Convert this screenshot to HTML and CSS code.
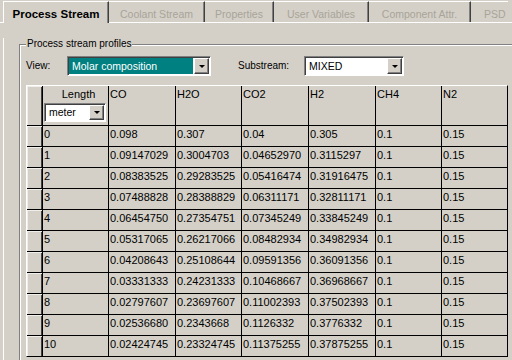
FILE: index.html
```html
<!DOCTYPE html>
<html lang="en">
<head>
    <meta charset="UTF-8">
    <title>Process Stream</title>
    <link rel="stylesheet" href="styles.css">
</head>
<body>

<div class="tabs">
    <div class="tab tab-active" style="width: 106px">Process Stream</div>
    <div class="tab" style="width: 96px">Coolant Stream</div>
    <div class="tab" style="width: 69px">Properties</div>
    <div class="tab" style="width: 95px">User Variables</div>
    <div class="tab" style="width: 102px">Component Attr.</div>
    <div class="tab tab-last" style="width: 37px">PSD</div>
</div>

<div class="panel">
    <fieldset class="group">
        <legend>Process stream profiles</legend>

        <div class="view-row">
            <span class="label label-view">View:</span>
            <div class="combo combo-view">
                <div class="combo-value selected">Molar composition</div>
                <div class="combo-btn"><span class="arrow"></span></div>
            </div>
            <span class="label label-sub">Substream:</span>
            <div class="combo combo-sub">
                <div class="combo-value">MIXED</div>
                <div class="combo-btn"><span class="arrow"></span></div>
            </div>
        </div>

        <div class="grid">
            <!-- header row -->
            <div class="cell rowhead"></div>
            <div class="cell head head-length">
                <div class="length-title">Length</div>
                <div class="combo combo-unit">
                    <div class="combo-value">meter</div>
                    <div class="combo-btn"><span class="arrow"></span></div>
                </div>
            </div>
            <div class="cell head">CO</div>
            <div class="cell head">H2O</div>
            <div class="cell head">CO2</div>
            <div class="cell head">H2</div>
            <div class="cell head">CH4</div>
            <div class="cell head">N2</div>

            <div class="cell rowhead"></div><div class="cell">0</div><div class="cell">0.098</div><div class="cell">0.307</div><div class="cell">0.04</div><div class="cell">0.305</div><div class="cell">0.1</div><div class="cell">0.15</div>
            <div class="cell rowhead"></div><div class="cell">1</div><div class="cell">0.09147029</div><div class="cell">0.3004703</div><div class="cell">0.04652970</div><div class="cell">0.3115297</div><div class="cell">0.1</div><div class="cell">0.15</div>
            <div class="cell rowhead"></div><div class="cell">2</div><div class="cell">0.08383525</div><div class="cell">0.29283525</div><div class="cell">0.05416474</div><div class="cell">0.31916475</div><div class="cell">0.1</div><div class="cell">0.15</div>
            <div class="cell rowhead"></div><div class="cell">3</div><div class="cell">0.07488828</div><div class="cell">0.28388829</div><div class="cell">0.06311171</div><div class="cell">0.32811171</div><div class="cell">0.1</div><div class="cell">0.15</div>
            <div class="cell rowhead"></div><div class="cell">4</div><div class="cell">0.06454750</div><div class="cell">0.27354751</div><div class="cell">0.07345249</div><div class="cell">0.33845249</div><div class="cell">0.1</div><div class="cell">0.15</div>
            <div class="cell rowhead"></div><div class="cell">5</div><div class="cell">0.05317065</div><div class="cell">0.26217066</div><div class="cell">0.08482934</div><div class="cell">0.34982934</div><div class="cell">0.1</div><div class="cell">0.15</div>
            <div class="cell rowhead"></div><div class="cell">6</div><div class="cell">0.04208643</div><div class="cell">0.25108644</div><div class="cell">0.09591356</div><div class="cell">0.36091356</div><div class="cell">0.1</div><div class="cell">0.15</div>
            <div class="cell rowhead"></div><div class="cell">7</div><div class="cell">0.03331333</div><div class="cell">0.24231333</div><div class="cell">0.10468667</div><div class="cell">0.36968667</div><div class="cell">0.1</div><div class="cell">0.15</div>
            <div class="cell rowhead"></div><div class="cell">8</div><div class="cell">0.02797607</div><div class="cell">0.23697607</div><div class="cell">0.11002393</div><div class="cell">0.37502393</div><div class="cell">0.1</div><div class="cell">0.15</div>
            <div class="cell rowhead"></div><div class="cell">9</div><div class="cell">0.02536680</div><div class="cell">0.2343668</div><div class="cell">0.1126332</div><div class="cell">0.3776332</div><div class="cell">0.1</div><div class="cell">0.15</div>
            <div class="cell rowhead"></div><div class="cell">10</div><div class="cell">0.02424745</div><div class="cell">0.23324745</div><div class="cell">0.11375255</div><div class="cell">0.37875255</div><div class="cell">0.1</div><div class="cell">0.15</div>
        </div>
    </fieldset>
</div>

</body>
</html>
```

FILE: styles.css
```css
body {
    margin: 0;
    width: 512px;
    height: 360px;
    overflow: hidden;
    background-color: #d4d0c8;
    font-family: "Liberation Sans", Arial, sans-serif;
    color: #000;
}

/* tab strip */
.tabs {
    display: flex;
    align-items: flex-start;
    height: 22px;
    padding-left: 3px;
    border-bottom: 1px solid #fff;
}
.tab {
    flex: none;
    box-sizing: border-box;
    height: 21px;
    margin-top: 1px;
    padding-top: 5px;
    border-top: 1px solid #fff;
    border-right: 1px solid #404040;
    box-shadow: inset -1px 0 #808080;
    font-size: 10.5px;
    line-height: 14px;
    text-align: center;
    color: #a8a498;
    white-space: nowrap;
    overflow: hidden;
}
.tab-last {
    text-align: left;
    padding-left: 13px;
    border-right: none;
    box-shadow: none;
}
.tab-active {
    height: 22px;
    border-left: 1px solid #fff;
    font-size: 11.5px;
    font-weight: bold;
    color: #000;
    background-color: #d4d0c8;
}

.panel {
    margin-left: 3px;
    height: 337px;
    border-left: 1px solid #fff;
}

/* group box, runs off the right and bottom of the window */
.group {
    box-sizing: border-box;
    width: 493px;
    height: 322px;
    margin: 15px 0 0 15px;
    padding: 6px 0 0 6px;
    border: 1px solid #808080;
    border-right: none;
    border-bottom: none;
    box-shadow: inset 1px 1px #fff;
}
.group legend {
    padding: 0 1px;
    font-size: 10px;
    line-height: 12px;
    background-color: #d4d0c8;
}

.view-row {
    display: flex;
    align-items: center;
    height: 20px;
}
.label {
    font-size: 10px;
    line-height: 12px;
}
.label-view {
    width: 41px;
}
.label-sub {
    width: 66px;
    margin-left: 27px;
}

/* combo boxes */
.combo {
    box-sizing: border-box;
    display: flex;
    height: 20px;
    padding: 1px;
    border: 1px solid;
    border-color: #808080 #fff #fff #808080;
    box-shadow: inset 1px 1px #404040;
    background-color: #fff;
}
.combo-view {
    width: 144px;
}
.combo-sub {
    width: 100px;
}
.combo-value {
    flex: 1;
    padding-left: 3px;
    margin-right: 1px;
    font-size: 10.5px;
    line-height: 16px;
    white-space: nowrap;
    overflow: hidden;
}
.selected {
    background-color: #008080;
    color: #fff;
}
.combo-btn {
    box-sizing: border-box;
    width: 15px;
    display: flex;
    align-items: center;
    justify-content: center;
    background-color: #d4d0c8;
    border: 1px solid;
    border-color: #fff #404040 #404040 #fff;
    box-shadow: inset -1px -1px #808080;
}
.arrow {
    width: 0;
    height: 0;
    border-left: 3px solid transparent;
    border-right: 3px solid transparent;
    border-top: 3px solid #000;
}

/* data grid */
.grid {
    display: grid;
    grid-template-columns: 15px 65px 66px 65px 66px 66px 65px 65px;
    grid-template-rows: 39px repeat(11, 20px);
    gap: 1px;
    width: 482px;
    box-sizing: border-box;
    margin-top: 9px;
    background-color: #000;
    border: 1px solid;
    border-color: #fff #000 #000 #fff;
}
.cell {
    background-color: #d4d0c8;
    padding: 1px 0 0 1px;
    font-size: 11px;
    line-height: 14px;
    white-space: nowrap;
    overflow: hidden;
}
.rowhead {
    padding: 0;
    box-shadow: inset 1px 1px #f0eee8, inset -1px 0 #404040;
}
.length-title {
    text-align: center;
    padding-left: 5px;
}
.combo-unit {
    width: 62px;
    height: 19px;
    margin-top: 2px;
}
.combo-unit .combo-value {
    line-height: 15px;
}
```
